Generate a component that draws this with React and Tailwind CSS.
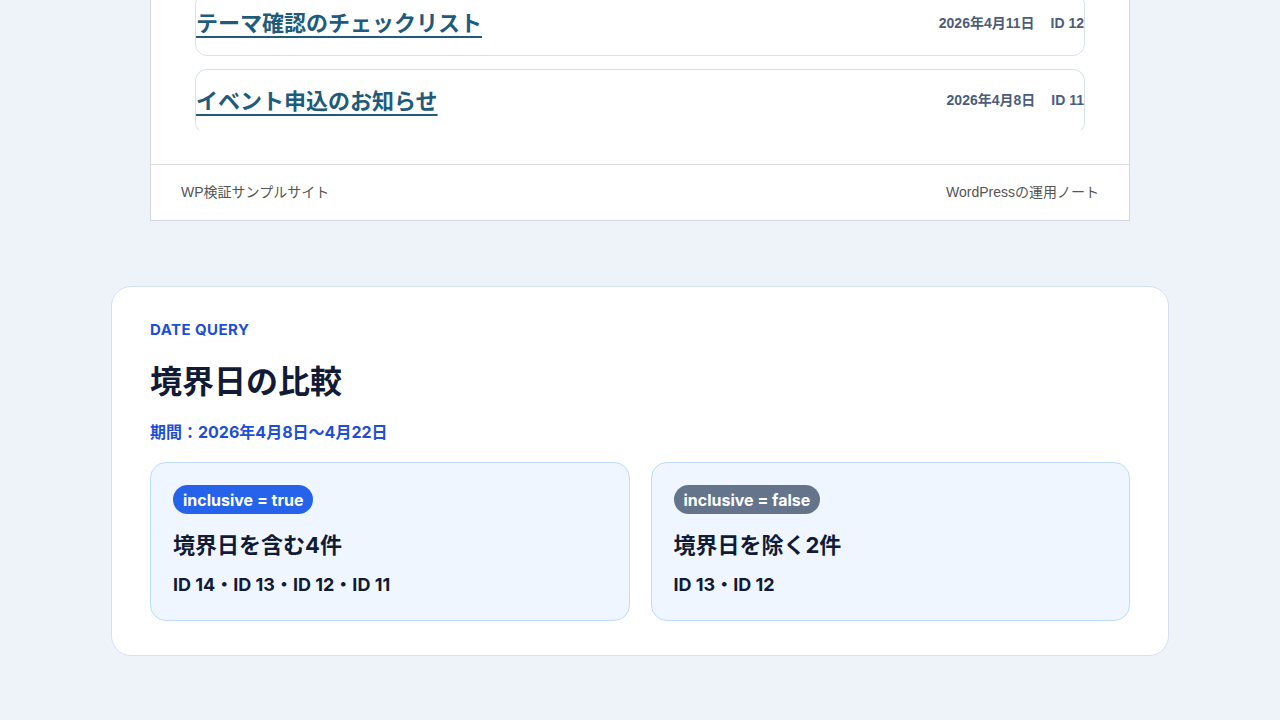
import React from "react";

const posts = [
  { title: "テーマ確認のチェックリスト", date: "2026年4月11日", id: 12 },
  { title: "イベント申込のお知らせ", date: "2026年4月8日", id: 11 },
];

const results = [
  {
    badge: "inclusive = true",
    badgeClass: "bg-[#2563eb]",
    heading: "境界日を含む4件",
    ids: "ID 14・ID 13・ID 12・ID 11",
  },
  {
    badge: "inclusive = false",
    badgeClass: "bg-[#64748b]",
    heading: "境界日を除く2件",
    ids: "ID 13・ID 12",
  },
];

function PostRow({ post, last }) {
  return (
    <li
      className={
        "flex h-[64px] items-center justify-between rounded-[12px] border border-[#d9e2ec] bg-white " +
        (last ? "h-[65px] border-b-white" : "")
      }
    >
      <a
        href="#"
        className="mb-[6px] text-[22px] font-bold leading-[30px] text-[#1f5b7a] underline decoration-2 underline-offset-[5px]"
        style={{ fontFamily: '"Noto Sans CJK JP", sans-serif' }}
      >
        {post.title}
      </a>
      <div className="mb-[2px] flex gap-4 text-[14px] font-bold text-[#4b5d7a]">
        <span>{post.date}</span>
        <span>ID {post.id}</span>
      </div>
    </li>
  );
}

export default function App() {
  return (
    <div
      className="min-h-screen overflow-hidden bg-[#eef2f9] pb-16"
      style={{ fontFamily: '"Liberation Sans", "Noto Sans CJK JP", sans-serif' }}
    >
      {/* preview frame of the site */}
      <div className="mx-auto -mt-[9px] w-[980px] border border-[#d4d8de] bg-white">
        <ul className="flex flex-col gap-[13px] px-[44px] pb-[30px]">
          {posts.map((p, i) => (
            <PostRow key={p.id} post={p} last={i === posts.length - 1} />
          ))}
        </ul>
        <footer className="flex h-[56px] items-center justify-between border-t border-[#d9dde3] px-[30px] text-[14px] text-[#555]">
          <span>WP検証サンプルサイト</span>
          <span>WordPressの運用ノート</span>
        </footer>
      </div>

      {/* comparison card */}
      <section
        className="mx-auto mt-[65px] w-[1058px] rounded-[20px] border border-[#d6e2f1] bg-white px-[38px] pb-[34px] pt-[33px]"
        style={{ fontFamily: 'Inter, "Noto Sans CJK JP", sans-serif' }}
      >
        <p className="text-[15px] font-bold leading-5 tracking-[0.03em] text-[#1d4ed8]">DATE QUERY</p>
        <h2 className="mt-[22px] text-[32px] font-bold leading-[40px] text-[#111b36]">境界日の比較</h2>
        <p className="mt-[19px] text-[16px] font-bold leading-[22px] text-[#1d4ed8]">
          期間：2026年4月8日〜4月22日
        </p>
        <div className="mt-[19px] grid grid-cols-2 gap-[21px]">
          {results.map((r) => (
            <div
              key={r.badge}
              className="rounded-[16px] border border-[#bfdbfe] bg-[#eff6ff] px-[22px] pb-[23px] pt-[22px]"
            >
              <span
                className={
                  "inline-flex h-[29px] items-center rounded-full px-[10px] text-[16px] font-bold text-white " +
                  r.badgeClass
                }
              >
                {r.badge}
              </span>
              <h3 className="mt-[16px] text-[22px] font-bold leading-[30px] text-[#111b36]">{r.heading}</h3>
              <p className="mt-[13px] text-[18px] font-bold leading-[24px] text-[#111b36]">{r.ids}</p>
            </div>
          ))}
        </div>
      </section>
    </div>
  );
}
